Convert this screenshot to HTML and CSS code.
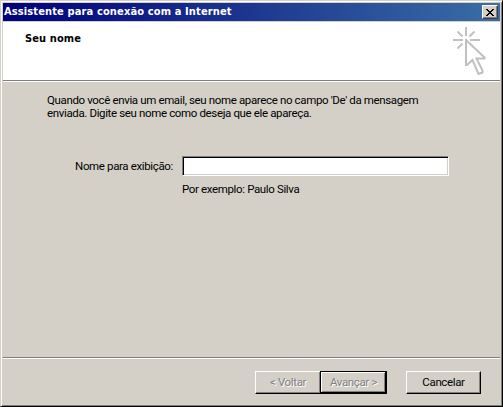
FILE: index.html
```html
<!DOCTYPE html>
<html lang="pt-BR">
<head>
<meta charset="utf-8">
<title>Assistente para conexão com a Internet</title>
<link rel="stylesheet" href="styles.css">
</head>
<body>
<main class="window">
  <header class="titlebar">
    <h1 class="title">Assistente para conexão com a Internet</h1>
    <button class="close" aria-label="Fechar"><svg width="8" height="7" viewBox="0 0 8 7" shape-rendering="crispEdges"><path d="M0 0h2v1h1v1h2v-1h1v-1h2v1h-1v1h-1v1h-1v1h1v1h1v1h1v1h-2v-1h-1v-1h-2v1h-1v1h-2v-1h1v-1h1v-1h1v-1h-1v-1h-1v-1h-1z"/></svg></button>
  </header>
  <section class="banner">
    <h2 class="heading">Seu nome</h2>
    <svg class="cursor" width="36" height="52" viewBox="0 0 36 52" fill="none" stroke="#c0c0c0" stroke-width="2">
      <path d="M14 1v9M1 14h10M18 14h10M5.500 5.500l5 5M22.500 5.500l-5 5M5.500 22.500l5-5"/>
      <path d="M14 13v26h1l5.500-5 6 14 4-1.500v-2l-6-12h8v-1L14 14"/>
    </svg>
  </section>
  <section class="content">
    <p class="intro">Quando você envia um email, seu nome aparece no campo 'De' da mensagem<br>enviada. Digite seu nome como deseja que ele apareça.</p>
    <div class="form">
      <label class="label" for="name">Nome para exibição:</label>
      <input class="field" id="name" type="text">
      <span class="example">Por exemplo: Paulo Silva</span>
    </div>
  </section>
  <footer class="footer">
    <button class="button back" disabled>&lt; Voltar</button>
    <button class="button next" disabled>Avançar &gt;</button>
    <button class="button cancel">Cancelar</button>
  </footer>
</main>
</body>
</html>
```
FILE: styles.css
```css
* { box-sizing: border-box; }
body { margin: 0; }
.window {
  width: 503px; height: 407px; padding: 2px 1px 1px 2px;
  display: flex; flex-direction: column;
  background: #d4d0c8; color: #000;
  font: 11.5px/13px Roboto, "Liberation Sans", sans-serif;
  letter-spacing: -0.36px;
  border: 1px solid; border-color: #d4d0c8 #000 #000 #d4d0c8;
  box-shadow: inset 1px 1px #fff, inset -1px -1px #808080;
}
.titlebar {
  height: 18px; margin-right: 1px; padding: 0 2px 0 1px; flex: none;
  display: flex; align-items: center; justify-content: space-between;
  background: linear-gradient(90deg, #00007b, #3a6ea5);
}
.title {
  margin: 0; color: #fff; white-space: nowrap;
  font: bold 11px/18px "DejaVu Sans Condensed", "DejaVu Sans", sans-serif;
  letter-spacing: 0.13px;
}
.close {
  width: 16px; height: 14px; padding: 0 1px 0 0;
  display: flex; align-items: center; justify-content: center;
  background: #d4d0c8; border: 1px solid; border-color: #fff #404040 #404040 #fff;
  box-shadow: inset -1px -1px #808080;
}
.banner {
  height: 60px; margin: 1px 1px 0 0; padding: 4px 12px 0 22px; flex: none;
  display: flex; justify-content: space-between;
  background: #fff; border-bottom: 1px solid #fff;
  box-shadow: inset 0 -1px #808080;
}
.cursor { flex: none; }
.heading {
  margin: 6px 0 0; white-space: nowrap; letter-spacing: 0.1px;
  font: bold 11px/14px "DejaVu Sans Condensed", "DejaVu Sans", sans-serif;
}
.content { flex: 1; padding: 12px 51px 0 44px; }
.intro { margin: 0; white-space: nowrap; }
.form {
  margin-top: 36px; display: grid;
  grid-template-columns: 126px 267px; column-gap: 9px; row-gap: 7px;
  align-items: center; white-space: nowrap;
}
.label { text-align: right; }
.field {
  width: 267px; height: 20px; padding: 0 2px; outline: 0;
  background: #fff; border: 1px solid; border-color: #808080 #fff #fff #808080;
  box-shadow: inset 1px 1px #000, inset -1px -1px #d4d0c8;
}
.example { grid-column: 2; }
.footer {
  height: 48px; margin-right: 1px; padding: 13px 19px 0 0; flex: none;
  display: flex; justify-content: flex-end; align-items: flex-start;
  border-top: 1px solid #808080; box-shadow: inset 0 1px #fff;
}
.button {
  height: 23px; padding: 0; white-space: nowrap;
  font: inherit; letter-spacing: inherit; color: #000; background: #d4d0c8;
  border: 1px solid; border-color: #fff #000 #000 #fff;
  box-shadow: inset -1px -1px #808080;
}
.button:disabled { color: #808080; text-shadow: 1px 1px #fff; }
.back { width: 65px; border-right-width: 0; }
.next { width: 67px; border-color: #000; box-shadow: inset -1px -1px #000, inset 1px 1px #fff, inset -2px -2px #808080; }
.cancel { width: 75px; margin-left: 19px; }
```
